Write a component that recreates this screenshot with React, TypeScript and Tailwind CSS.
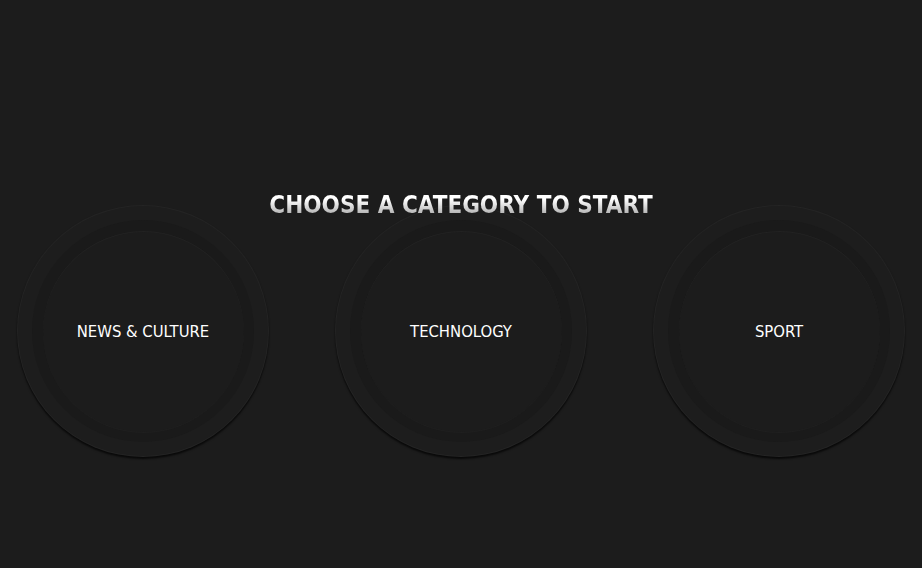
import React from "react";

const cats = ["NEWS & CULTURE", "TECHNOLOGY", "SPORT"];

function Circle({ label }: { label: string }) {
  return (
    <div className="w-[252px] h-[252px] rounded-full bg-white/[0.006] border border-white/[0.03] shadow-[0_2px_2px_rgba(0,0,0,0.7)] flex items-center justify-center">
      <div className="w-[222px] h-[222px] rounded-full bg-[#1a1a1a] flex items-center justify-center">
        <div className="w-[201px] h-[201px] rounded-full bg-[#1c1c1c] shadow-[inset_0_1px_0_#222222,0_1px_0_#1f1f1f] flex items-center justify-center">
          <span className="pt-[2px] text-[16.5px] text-white font-['DejaVu_Sans_Condensed','DejaVu_Sans',sans-serif]">
            {label}
          </span>
        </div>
      </div>
    </div>
  );
}

export default function App() {
  return (
    <div className="min-h-screen w-full bg-[#1c1c1c] flex flex-col items-stretch pt-[190px]">
      <h1 className="text-center text-[24px] leading-[30px] font-bold font-['DejaVu_Sans_Condensed','DejaVu_Sans',sans-serif]">
        <span className="bg-gradient-to-b from-white from-30% to-[#9a9a9a] bg-clip-text text-transparent">
          CHOOSE A CATEGORY TO START
        </span>
      </h1>
      <div className="relative flex justify-between px-[17px] mt-[-15px]">
        {cats.map((c) => (
          <Circle key={c} label={c} />
        ))}
      </div>
    </div>
  );
}
